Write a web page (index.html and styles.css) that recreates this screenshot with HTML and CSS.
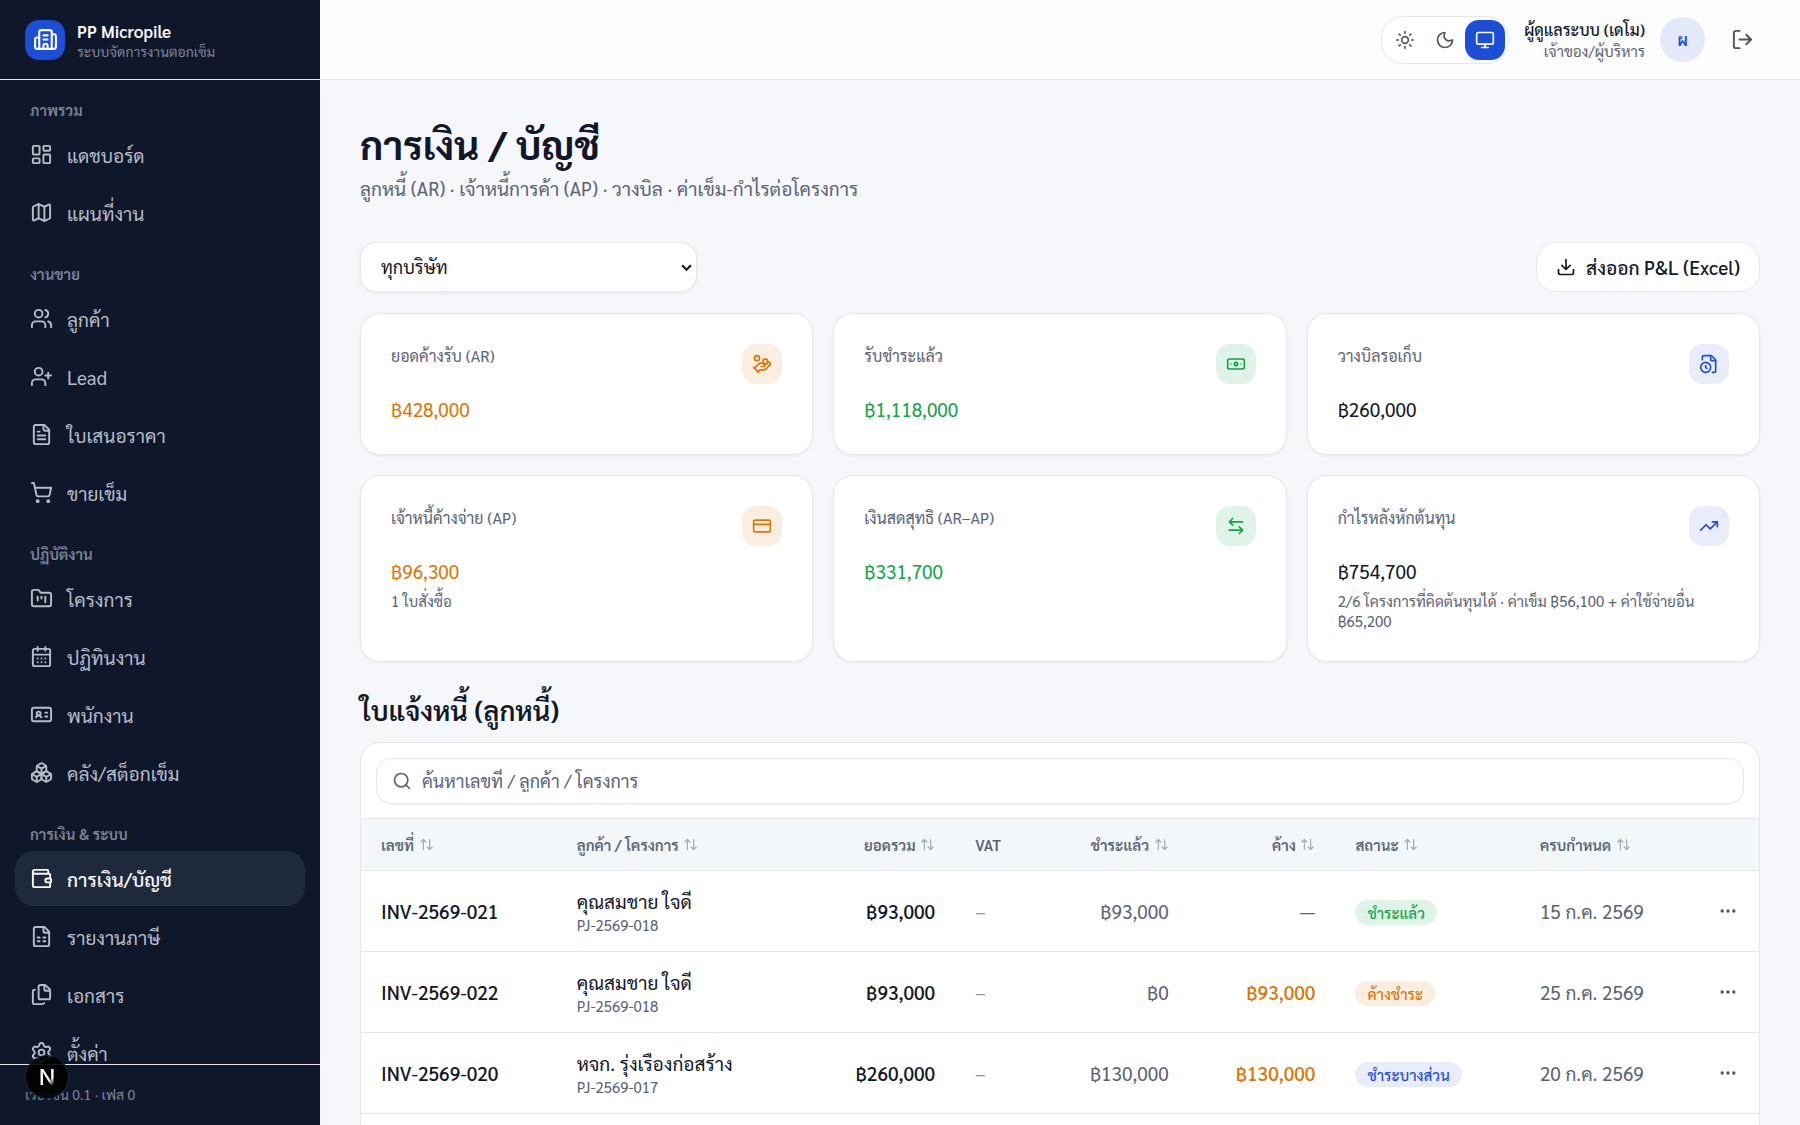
FILE: index.html
```html
<!DOCTYPE html>
<html lang="th">
<head>
  <meta charset="UTF-8" />
  <meta name="viewport" content="width=device-width, initial-scale=1.0" />
  <title>การเงิน / บัญชี - PP Micropile</title>
  <link rel="stylesheet" href="styles.css">
</head>
<body>
  <!-- shared icons -->
  <svg class="sprite" aria-hidden="true">
    <symbol id="i-sort" viewBox="0 0 24 24"><path d="m21 16-4 4-4-4M17 20V4M3 8l4-4 4 4M7 4v16"/></symbol>
    <symbol id="i-dots" viewBox="0 0 24 24"><circle cx="12" cy="12" r="1"/><circle cx="19" cy="12" r="1"/><circle cx="5" cy="12" r="1"/></symbol>
  </svg>

  <div class="app">
    <aside class="sidebar">
      <div class="brand">
        <div class="brand-logo">
          <svg class="icon" viewBox="0 0 24 24"><path d="M10 12h4M10 8h4M14 21v-3a2 2 0 0 0-4 0v3"/><path d="M6 10H4a2 2 0 0 0-2 2v7a2 2 0 0 0 2 2h16a2 2 0 0 0 2-2V9a2 2 0 0 0-2-2h-2"/><path d="M6 21V5a2 2 0 0 1 2-2h8a2 2 0 0 1 2 2v16"/></svg>
        </div>
        <div class="brand-text">
          <div class="brand-name">PP Micropile</div>
          <div class="brand-sub">ระบบจัดการงานตอกเข็ม</div>
        </div>
      </div>

      <nav class="nav">
        <div class="nav-group">
          <div class="nav-label">ภาพรวม</div>
          <a href="#" class="nav-item">
            <svg class="icon" viewBox="0 0 24 24"><rect width="7" height="9" x="3" y="3" rx="1"/><rect width="7" height="5" x="14" y="3" rx="1"/><rect width="7" height="9" x="14" y="12" rx="1"/><rect width="7" height="5" x="3" y="16" rx="1"/></svg>
            <span>แดชบอร์ด</span>
          </a>
          <a href="#" class="nav-item">
            <svg class="icon" viewBox="0 0 24 24"><path d="M14.106 5.553a2 2 0 0 0 1.788 0l3.659-1.83A1 1 0 0 1 21 4.619v12.764a1 1 0 0 1-.553.894l-4.553 2.277a2 2 0 0 1-1.788 0l-4.212-2.106a2 2 0 0 0-1.788 0l-3.659 1.83A1 1 0 0 1 3 19.381V6.618a1 1 0 0 1 .553-.894l4.553-2.277a2 2 0 0 1 1.788 0z"/><path d="M15 5.764v15M9 3.236v15"/></svg>
            <span>แผนที่งาน</span>
          </a>
        </div>

        <div class="nav-group">
          <div class="nav-label">งานขาย</div>
          <a href="#" class="nav-item">
            <svg class="icon" viewBox="0 0 24 24"><path d="M16 21v-2a4 4 0 0 0-4-4H6a4 4 0 0 0-4 4v2M16 3.128a4 4 0 0 1 0 7.744M22 21v-2a4 4 0 0 0-3-3.87"/><circle cx="9" cy="7" r="4"/></svg>
            <span>ลูกค้า</span>
          </a>
          <a href="#" class="nav-item">
            <svg class="icon" viewBox="0 0 24 24"><path d="M16 21v-2a4 4 0 0 0-4-4H6a4 4 0 0 0-4 4v2M19 8v6M22 11h-6"/><circle cx="9" cy="7" r="4"/></svg>
            <span>Lead</span>
          </a>
          <a href="#" class="nav-item">
            <svg class="icon" viewBox="0 0 24 24"><path d="M15 2H6a2 2 0 0 0-2 2v16a2 2 0 0 0 2 2h12a2 2 0 0 0 2-2V7z"/><path d="M14 2v4a2 2 0 0 0 2 2h4M10 9H8M16 13H8M16 17H8"/></svg>
            <span>ใบเสนอราคา</span>
          </a>
          <a href="#" class="nav-item">
            <svg class="icon" viewBox="0 0 24 24"><circle cx="8" cy="21" r="1"/><circle cx="19" cy="21" r="1"/><path d="M2.05 2.05h2l2.66 12.42a2 2 0 0 0 2 1.58h9.78a2 2 0 0 0 1.95-1.57l1.65-7.43H5.12"/></svg>
            <span>ขายเข็ม</span>
          </a>
        </div>

        <div class="nav-group">
          <div class="nav-label">ปฏิบัติงาน</div>
          <a href="#" class="nav-item">
            <svg class="icon" viewBox="0 0 24 24"><path d="M4 20h16a2 2 0 0 0 2-2V8a2 2 0 0 0-2-2h-7.93a2 2 0 0 1-1.66-.9l-.82-1.2A2 2 0 0 0 7.93 3H4a2 2 0 0 0-2 2v13c0 1.1.9 2 2 2Z"/><path d="M8 10v4M12 10v2M16 10v6"/></svg>
            <span>โครงการ</span>
          </a>
          <a href="#" class="nav-item">
            <svg class="icon" viewBox="0 0 24 24"><path d="M8 2v4M16 2v4M3 10h18"/><rect width="18" height="18" x="3" y="4" rx="2"/><path d="M8 14h.01M12 14h.01M16 14h.01M8 18h.01M12 18h.01M16 18h.01"/></svg>
            <span>ปฏิทินงาน</span>
          </a>
          <a href="#" class="nav-item">
            <svg class="icon" viewBox="0 0 24 24"><path d="M16 10h2M16 14h2M6.17 15a3 3 0 0 1 5.66 0"/><circle cx="9" cy="11" r="2"/><rect x="2" y="5" width="20" height="14" rx="2"/></svg>
            <span>พนักงาน</span>
          </a>
          <a href="#" class="nav-item">
            <svg class="icon" viewBox="0 0 24 24"><path d="M2.97 12.92A2 2 0 0 0 2 14.63v3.24a2 2 0 0 0 .97 1.71l3 1.8a2 2 0 0 0 2.06 0L12 19v-5.5l-5-3-4.03 2.42Z"/><path d="m7 16.5-4.74-2.85M7 16.5l5-3M7 16.5v5.17"/><path d="M12 13.5V19l3.97 2.38a2 2 0 0 0 2.06 0l3-1.8a2 2 0 0 0 .97-1.71v-3.24a2 2 0 0 0-.97-1.71L17 10.5l-5 3Z"/><path d="m17 16.5-5-3M17 16.5l4.74-2.85M17 16.5v5.17"/><path d="M7.97 4.42A2 2 0 0 0 7 6.13v4.37l5 3 5-3V6.13a2 2 0 0 0-.97-1.71l-3-1.8a2 2 0 0 0-2.06 0l-3 1.8Z"/><path d="M12 8 7.26 5.15M12 8l4.74-2.85M12 13.5V8"/></svg>
            <span>คลัง/สต็อกเข็ม</span>
          </a>
        </div>

        <div class="nav-group">
          <div class="nav-label">การเงิน &amp; ระบบ</div>
          <a href="#" class="nav-item active" aria-current="page">
            <svg class="icon" viewBox="0 0 24 24"><path d="M19 7V4a1 1 0 0 0-1-1H5a2 2 0 0 0 0 4h15a1 1 0 0 1 1 1v4h-3a2 2 0 0 0 0 4h3a1 1 0 0 0 1-1v-2a1 1 0 0 0-1-1"/><path d="M3 5v14a2 2 0 0 0 2 2h15a1 1 0 0 0 1-1v-4"/></svg>
            <span>การเงิน/บัญชี</span>
          </a>
          <a href="#" class="nav-item">
            <svg class="icon" viewBox="0 0 24 24"><path d="M15 2H6a2 2 0 0 0-2 2v16a2 2 0 0 0 2 2h12a2 2 0 0 0 2-2V7z"/><path d="M14 2v4a2 2 0 0 0 2 2h4M8 13h2M14 13h2M8 17h2M14 17h2"/></svg>
            <span>รายงานภาษี</span>
          </a>
          <a href="#" class="nav-item">
            <svg class="icon" viewBox="0 0 24 24"><path d="M15 2h-4a2 2 0 0 0-2 2v11a2 2 0 0 0 2 2h8a2 2 0 0 0 2-2V8"/><path d="M16.706 2.706A2.4 2.4 0 0 0 15 2v5a1 1 0 0 0 1 1h5a2.4 2.4 0 0 0-.706-1.706z"/><path d="M5 7a2 2 0 0 0-2 2v11a2 2 0 0 0 2 2h8a2 2 0 0 0 1.732-1"/></svg>
            <span>เอกสาร</span>
          </a>
          <a href="#" class="nav-item">
            <svg class="icon" viewBox="0 0 24 24"><path d="M9.671 4.136a2.34 2.34 0 0 1 4.659 0 2.34 2.34 0 0 0 3.319 1.915 2.34 2.34 0 0 1 2.33 4.033 2.34 2.34 0 0 0 0 3.831 2.34 2.34 0 0 1-2.33 4.033 2.34 2.34 0 0 0-3.319 1.915 2.34 2.34 0 0 1-4.659 0 2.34 2.34 0 0 0-3.32-1.915 2.34 2.34 0 0 1-2.33-4.033 2.34 2.34 0 0 0 0-3.831A2.34 2.34 0 0 1 6.35 6.051a2.34 2.34 0 0 0 3.319-1.915"/><circle cx="12" cy="12" r="3"/></svg>
            <span>ตั้งค่า</span>
          </a>
        </div>
      </nav>

      <div class="sidebar-footer">เวอร์ชัน 0.1 · เฟส 0</div>
      <button class="dev-badge" type="button" aria-label="Dev tools"><span>N</span></button>
    </aside>

    <div class="content">
      <header class="topbar">
        <div class="theme-switch">
          <button type="button" class="theme-btn" aria-label="สว่าง"><svg class="icon" viewBox="0 0 24 24"><circle cx="12" cy="12" r="4"/><path d="M12 2v2M12 20v2M4.93 4.93l1.41 1.41M17.66 17.66l1.41 1.41M2 12h2M20 12h2M6.34 17.66l-1.41 1.41M19.07 4.93l-1.41 1.41"/></svg></button>
          <button type="button" class="theme-btn" aria-label="มืด"><svg class="icon" viewBox="0 0 24 24"><path d="M20.985 12.486a9 9 0 1 1-9.473-9.472c.405-.022.617.46.402.803a6 6 0 0 0 8.268 8.268c.344-.215.825-.004.803.401"/></svg></button>
          <button type="button" class="theme-btn active" aria-label="ตามระบบ"><svg class="icon" viewBox="0 0 24 24"><rect width="20" height="14" x="2" y="3" rx="2"/><path d="M8 21h8M12 17v4"/></svg></button>
        </div>
        <div class="user">
          <div class="user-name">ผู้ดูแลระบบ (เดโม)</div>
          <div class="user-role">เจ้าของ/ผู้บริหาร</div>
        </div>
        <div class="avatar">ผ</div>
        <button type="button" class="logout" aria-label="ออกจากระบบ"><svg class="icon" viewBox="0 0 24 24"><path d="m16 17 5-5-5-5M21 12H9M9 21H5a2 2 0 0 1-2-2V5a2 2 0 0 1 2-2h4"/></svg></button>
      </header>

      <main class="main">
        <h1>การเงิน / บัญชี</h1>
        <p class="subtitle">ลูกหนี้ (AR) · เจ้าหนี้การค้า (AP) · วางบิล · ค่าเข็ม-กำไรต่อโครงการ</p>

        <div class="toolbar">
          <div class="select-wrap">
            <select class="company-select" aria-label="บริษัท">
              <option>ทุกบริษัท</option>
            </select>
            <svg class="select-arrow" viewBox="0 0 12 8"><path d="m2 2 4 4 4-4"/></svg>
          </div>
          <button type="button" class="export-btn">
            <svg class="icon" viewBox="0 0 24 24"><path d="M12 15V3M21 15v4a2 2 0 0 1-2 2H5a2 2 0 0 1-2-2v-4M7 10l5 5 5-5"/></svg>
            <span>ส่งออก P&amp;L (Excel)</span>
          </button>
        </div>

        <section class="stats">
          <div class="stat">
            <div class="stat-head">
              <span class="stat-label">ยอดค้างรับ (AR)</span>
              <span class="stat-icon orange"><svg class="icon" viewBox="0 0 24 24"><path d="M11 15h2a2 2 0 1 0 0-4h-3c-.6 0-1.1.2-1.4.6L3 17"/><path d="m7 21 1.6-1.4c.3-.4.8-.6 1.4-.6h4c1.1 0 2.1-.4 2.8-1.2l4.6-4.4a2 2 0 0 0-2.75-2.91l-4.2 3.9M2 16l6 6"/><circle cx="16" cy="9" r="2.9"/><circle cx="6" cy="5" r="3"/></svg></span>
            </div>
            <div class="stat-value text-orange">฿428,000</div>
          </div>
          <div class="stat">
            <div class="stat-head">
              <span class="stat-label">รับชำระแล้ว</span>
              <span class="stat-icon green"><svg class="icon" viewBox="0 0 24 24"><rect width="20" height="12" x="2" y="6" rx="2"/><circle cx="12" cy="12" r="2"/><path d="M6 12h.01M18 12h.01"/></svg></span>
            </div>
            <div class="stat-value text-green">฿1,118,000</div>
          </div>
          <div class="stat">
            <div class="stat-head">
              <span class="stat-label">วางบิลรอเก็บ</span>
              <span class="stat-icon blue"><svg class="icon" viewBox="0 0 24 24"><path d="M16 22h2a2 2 0 0 0 2-2V8a2.4 2.4 0 0 0-.706-1.706l-3.588-3.588A2.4 2.4 0 0 0 14 2H6a2 2 0 0 0-2 2v2.85"/><path d="M14 2v5a1 1 0 0 0 1 1h5M8 14v2.2l1.6 1"/><circle cx="8" cy="16" r="6"/></svg></span>
            </div>
            <div class="stat-value">฿260,000</div>
          </div>
          <div class="stat">
            <div class="stat-head">
              <span class="stat-label">เจ้าหนี้ค้างจ่าย (AP)</span>
              <span class="stat-icon orange"><svg class="icon" viewBox="0 0 24 24"><rect width="20" height="14" x="2" y="5" rx="2"/><path d="M2 10h20"/></svg></span>
            </div>
            <div class="stat-value text-orange">฿96,300</div>
            <div class="stat-note">1 ใบสั่งซื้อ</div>
          </div>
          <div class="stat">
            <div class="stat-head">
              <span class="stat-label">เงินสดสุทธิ (AR–AP)</span>
              <span class="stat-icon green"><svg class="icon" viewBox="0 0 24 24"><path d="M8 3 4 7l4 4M4 7h16M16 21l4-4-4-4M20 17H4"/></svg></span>
            </div>
            <div class="stat-value text-green">฿331,700</div>
          </div>
          <div class="stat">
            <div class="stat-head">
              <span class="stat-label">กำไรหลังหักต้นทุน</span>
              <span class="stat-icon blue"><svg class="icon" viewBox="0 0 24 24"><path d="M16 7h6v6M22 7l-8.5 8.5-5-5L2 17"/></svg></span>
            </div>
            <div class="stat-value">฿754,700</div>
            <div class="stat-note">2/6 โครงการที่คิดต้นทุนได้ · ค่าเข็ม ฿56,100 + ค่าใช้จ่ายอื่น ฿65,200</div>
          </div>
        </section>

        <h2>ใบแจ้งหนี้ (ลูกหนี้)</h2>

        <section class="table-card">
          <div class="search">
            <svg class="icon" viewBox="0 0 24 24"><circle cx="11" cy="11" r="8"/><path d="m21 21-4.34-4.34"/></svg>
            <input type="text" placeholder="ค้นหาเลขที่ / ลูกค้า / โครงการ" aria-label="ค้นหาใบแจ้งหนี้" />
          </div>
          <table>
            <colgroup>
              <col class="col-no"><col class="col-customer"><col class="col-total"><col class="col-vat"><col class="col-paid"><col class="col-due"><col class="col-status"><col class="col-date"><col class="col-menu">
            </colgroup>
            <thead>
              <tr>
                <th>เลขที่ <svg class="icon sort"><use href="#i-sort"/></svg></th>
                <th>ลูกค้า / โครงการ <svg class="icon sort"><use href="#i-sort"/></svg></th>
                <th class="num">ยอดรวม <svg class="icon sort"><use href="#i-sort"/></svg></th>
                <th>VAT</th>
                <th class="num">ชำระแล้ว <svg class="icon sort"><use href="#i-sort"/></svg></th>
                <th class="num">ค้าง <svg class="icon sort"><use href="#i-sort"/></svg></th>
                <th>สถานะ <svg class="icon sort"><use href="#i-sort"/></svg></th>
                <th>ครบกำหนด <svg class="icon sort"><use href="#i-sort"/></svg></th>
                <th></th>
              </tr>
            </thead>
            <tbody>
              <tr>
                <td class="strong">INV-2569-021</td>
                <td><div>คุณสมชาย ใจดี</div><div class="project">PJ-2569-018</div></td>
                <td class="num strong">฿93,000</td>
                <td class="dim">–</td>
                <td class="num muted">฿93,000</td>
                <td class="num muted">—</td>
                <td><span class="badge green">ชำระแล้ว</span></td>
                <td class="muted">15 ก.ค. 2569</td>
                <td class="menu"><button type="button" aria-label="เมนู"><svg class="icon"><use href="#i-dots"/></svg></button></td>
              </tr>
              <tr>
                <td class="strong">INV-2569-022</td>
                <td><div>คุณสมชาย ใจดี</div><div class="project">PJ-2569-018</div></td>
                <td class="num strong">฿93,000</td>
                <td class="dim">–</td>
                <td class="num muted">฿0</td>
                <td class="num strong text-orange">฿93,000</td>
                <td><span class="badge orange">ค้างชำระ</span></td>
                <td class="muted">25 ก.ค. 2569</td>
                <td class="menu"><button type="button" aria-label="เมนู"><svg class="icon"><use href="#i-dots"/></svg></button></td>
              </tr>
              <tr>
                <td class="strong">INV-2569-020</td>
                <td><div>หจก. รุ่งเรืองก่อสร้าง</div><div class="project">PJ-2569-017</div></td>
                <td class="num strong">฿260,000</td>
                <td class="dim">–</td>
                <td class="num muted">฿130,000</td>
                <td class="num strong text-orange">฿130,000</td>
                <td><span class="badge blue">ชำระบางส่วน</span></td>
                <td class="muted">20 ก.ค. 2569</td>
                <td class="menu"><button type="button" aria-label="เมนู"><svg class="icon"><use href="#i-dots"/></svg></button></td>
              </tr>
              <tr>
                <td colspan="9"></td>
              </tr>
            </tbody>
          </table>
        </section>
      </main>
    </div>
  </div>
</body>
</html>
```
FILE: styles.css
```css
* {
  margin: 0;
  padding: 0;
  box-sizing: border-box;
}

body {
  font-family: Sarabun, 'Noto Sans Thai Looped', 'Noto Sans', sans-serif;
  font-size: 19px;
  line-height: 28px;
  color: #111827;
  background: #f5f7fb;
}

button,
input,
select {
  font: inherit;
  color: inherit;
}

button {
  cursor: pointer;
  border: none;
  background: none;
}

.sprite {
  display: none;
}

.icon {
  width: 20px;
  height: 20px;
  flex-shrink: 0;
  fill: none;
  stroke: currentColor;
  stroke-width: 2;
  stroke-linecap: round;
  stroke-linejoin: round;
}

.app {
  display: flex;
  height: 100vh;
  overflow: hidden;
}

/* Sidebar */
.sidebar {
  position: relative;
  width: 320px;
  flex-shrink: 0;
  display: flex;
  flex-direction: column;
  background: #0f172a;
  color: #b6bdc9;
}

.brand {
  height: 80px;
  flex-shrink: 0;
  display: flex;
  align-items: center;
  gap: 12px;
  padding: 0 25px;
  border-bottom: 1px solid #e5e7eb;
}

.brand-logo {
  width: 40px;
  height: 40px;
  display: flex;
  align-items: center;
  justify-content: center;
  border-radius: 14px;
  background: #1d4ed8;
  color: white;
}

.brand-logo .icon {
  width: 25px;
  height: 25px;
}

.brand-text {
  padding-top: 3px;
}

.brand-name {
  font-size: 17px;
  line-height: 20px;
  font-weight: 600;
  color: #f8fafc;
}

.brand-sub {
  font-size: 14px;
  line-height: 20px;
  color: #7d8696;
}

.nav {
  flex: 1;
  min-height: 0;
  overflow-y: auto;
  scrollbar-width: none;
  padding: 20px 15px;
  display: flex;
  flex-direction: column;
  gap: 24px;
}

.nav-group {
  display: flex;
  flex-direction: column;
  gap: 3px;
}

.nav-label {
  padding: 0 15px;
  margin-bottom: 4px;
  font-size: 15px;
  line-height: 20px;
  font-weight: 600;
  color: #7d8696;
}

.nav-item {
  height: 55px;
  flex-shrink: 0;
  display: flex;
  align-items: center;
  gap: 14px;
  padding: 0 15px;
  border-radius: 18px;
  color: inherit;
  text-decoration: none;
}

.nav-item .icon {
  width: 23px;
  height: 23px;
}

.nav-item.active {
  background: #1e293b;
  color: #f8fafc;
  font-weight: 500;
}

.sidebar-footer {
  height: 61px;
  flex-shrink: 0;
  padding: 19px 25px;
  border-top: 1px solid #e5e7eb;
  font-size: 14px;
  line-height: 20px;
  color: #7d8696;
}

.dev-badge {
  position: absolute;
  left: 26px;
  bottom: 27px;
  width: 42px;
  height: 42px;
  border-radius: 50%;
  background: rgba(0, 0, 0, 0.9);
  box-shadow: 0 0 0 1px #1f2430;
  font-family: Inter, sans-serif;
  font-size: 22px;
  font-weight: 500;
}

.dev-badge span {
  background: linear-gradient(135deg, white 65%, #333 80%);
  background-clip: text;
  color: transparent;
}

/* Top bar */
.content {
  flex: 1;
  min-width: 0;
  overflow-y: auto;
  scrollbar-width: none;
}

.topbar {
  height: 80px;
  display: flex;
  align-items: center;
  justify-content: flex-end;
  gap: 15px;
  padding: 0 35px;
  background: #fdfdfe;
  border-bottom: 1px solid #e5e7eb;
}

.theme-switch {
  display: flex;
  padding: 3px;
  border: 1px solid #e5e7eb;
  border-radius: 22px;
  background: white;
}

.theme-btn,
.logout {
  width: 40px;
  height: 40px;
  display: flex;
  align-items: center;
  justify-content: center;
  border-radius: 14px;
  color: #4b5563;
}

.theme-btn.active {
  background: #1d4ed8;
  color: white;
}

.user {
  text-align: right;
}

.user-name {
  font-size: 16px;
  line-height: 22px;
  font-weight: 500;
}

.user-role {
  font-size: 15px;
  line-height: 20px;
  color: #5b6475;
}

.avatar {
  width: 45px;
  height: 45px;
  display: flex;
  align-items: center;
  justify-content: center;
  border-radius: 50%;
  background: #e4e9fa;
  color: #1d4ed8;
  font-size: 16px;
  font-weight: 600;
}

.logout {
  width: 45px;
}

.logout .icon {
  width: 23px;
  height: 23px;
}

/* Page */
.main {
  padding: 40px;
}

h1 {
  font-size: 39px;
  line-height: 48px;
  font-weight: 700;
  color: #0f172a;
}

.subtitle {
  margin-top: 6px;
  color: #5b6475;
}

.toolbar {
  display: flex;
  align-items: center;
  justify-content: space-between;
  margin: 40px 0 21px;
}

.select-wrap {
  position: relative;
  width: 337px;
}

.company-select {
  width: 100%;
  height: 50px;
  padding: 0 20px;
  appearance: none;
  border: 1px solid #e5e7eb;
  border-radius: 16px;
  background: white;
  box-shadow: 0 1px 3px rgba(15, 23, 42, 0.08);
  font-size: 18px;
}

.select-arrow {
  position: absolute;
  right: 4px;
  top: 21px;
  width: 13px;
  height: 9px;
  fill: none;
  stroke: #111827;
  stroke-width: 2;
  pointer-events: none;
}

.export-btn {
  height: 50px;
  display: flex;
  align-items: center;
  gap: 10px;
  padding: 0 19px;
  border: 1px solid #e5e7eb;
  border-radius: 20px;
  background: white;
  font-weight: 500;
}

.stats {
  display: grid;
  grid-template-columns: repeat(3, 1fr);
  gap: 20px;
}

.stat {
  min-height: 142px;
  padding: 30px;
  border: 1px solid #e5e7eb;
  border-radius: 20px;
  background: white;
  box-shadow: 0 1px 3px rgba(15, 23, 42, 0.06);
}

.stat-head {
  display: flex;
  justify-content: space-between;
}

.stat-label {
  font-size: 16px;
  line-height: 24px;
  color: #5b6475;
}

.stat-icon {
  width: 40px;
  height: 40px;
  display: flex;
  align-items: center;
  justify-content: center;
  border-radius: 14px;
}

.stat-value {
  margin-top: 11px;
  line-height: 28px;
}

.stat-note {
  margin-top: 6px;
  font-size: 15px;
  line-height: 20px;
  color: #5b6475;
}

.orange {
  background: #faeee1;
  color: #d97706;
}

.green {
  background: #e0f3e8;
  color: #16a34a;
}

.blue {
  background: #e8ecfb;
  color: #1d4ed8;
}

.text-orange {
  color: #d97706;
}

.text-green {
  color: #16a34a;
}

h2 {
  margin: 30px 0 14px;
  font-size: 27px;
  line-height: 36px;
  font-weight: 600;
}

/* Invoice table */
.table-card {
  border: 1px solid #e5e7eb;
  border-radius: 20px;
  background: white;
  overflow: hidden;
}

.search {
  height: 46px;
  display: flex;
  align-items: center;
  gap: 10px;
  margin: 15px 15px 14px;
  padding: 0 15px;
  border: 1px solid #e5e7eb;
  border-radius: 16px;
  box-shadow: 0 1px 2px rgba(15, 23, 42, 0.06);
  color: #5b6475;
}

.search input {
  flex: 1;
  border: none;
  outline: none;
  background: none;
  font-size: 18px;
}

.search input::placeholder {
  color: #5b6475;
}

table {
  width: 100%;
  table-layout: fixed;
  border-collapse: collapse;
}

.col-no { width: 14%; }
.col-customer { width: 17%; }
.col-total { width: 11.5%; }
.col-vat { width: 7%; }
.col-paid { width: 9.7%; }
.col-due { width: 10.5%; }
.col-status { width: 13.2%; }
.col-date { width: 12.7%; }
.col-menu { width: 4.4%; }

th {
  height: 52px;
  padding: 0 20px;
  border-top: 1px solid #e5e7eb;
  border-bottom: 1px solid #e5e7eb;
  background: #f2f7fa;
  font-size: 15px;
  line-height: 20px;
  font-weight: 600;
  text-align: left;
  white-space: nowrap;
  color: #5b6475;
}

th .sort {
  width: 15px;
  height: 15px;
  margin-left: 1px;
  vertical-align: -1px;
  opacity: 0.5;
}

td {
  height: 81px;
  padding: 0 20px;
  border-bottom: 1px solid #e5e7eb;
  white-space: nowrap;
}

.num {
  text-align: right;
}

.strong {
  font-weight: 500;
}

.muted {
  color: #5b6475;
}

.dim {
  color: #8d94a0;
}

.project {
  font-size: 15px;
  line-height: 20px;
  color: #5b6475;
}

.badge {
  display: inline-block;
  padding: 2px 12px;
  border-radius: 13px;
  font-size: 15px;
  line-height: 21px;
  font-weight: 500;
}

.menu {
  padding: 0;
}

.menu button {
  display: flex;
  margin: 0 auto;
  color: #4b5563;
}
```
